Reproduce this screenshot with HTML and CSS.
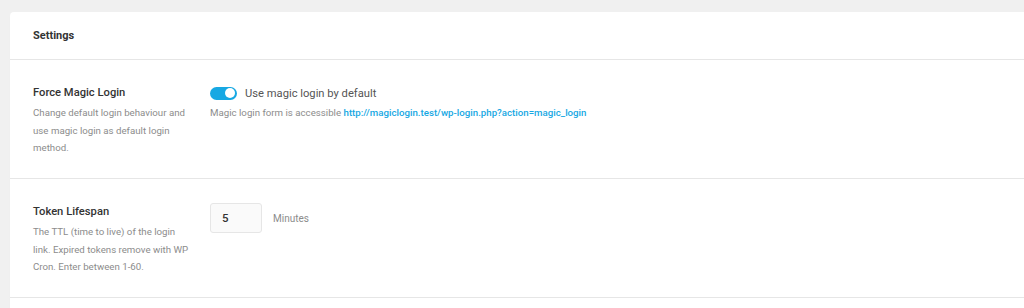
FILE: index.html
```html
<!DOCTYPE html>
<html>
<head>
<meta charset="utf-8">
<link rel="stylesheet" href="styles.css">
</head>
<body>
<div class="card">
  <div class="card-header">Settings</div>
  <div class="row">
    <div class="label-col">
      <div class="label">Force Magic Login</div>
      <p class="desc">Change default login behaviour and use magic login as default login method.</p>
    </div>
    <div class="field-col">
      <label class="toggle-line">
        <span class="toggle"><span class="knob"></span></span>
        <span class="toggle-text">Use magic login by default</span>
      </label>
      <p class="help">Magic login form is accessible <a class="link" href="#">http://magiclogin.test/wp-login.php?action=magic_login</a></p>
    </div>
  </div>
  <div class="row">
    <div class="label-col">
      <div class="label">Token Lifespan</div>
      <p class="desc">The TTL (time to live) of the login link. Expired tokens remove with WP Cron. Enter between 1-60.</p>
    </div>
    <div class="field-col">
      <div class="input-line">
        <span class="num-input">5</span>
        <span class="unit">Minutes</span>
      </div>
    </div>
  </div>
  <div class="tail"></div>
</div>
</body>
</html>
```
FILE: styles.css
```css
html, body {
  margin: 0;
  padding: 0;
  overflow: hidden;
}
body {
  background: #f0f0f0;
  font-family: Roboto, "Liberation Sans", sans-serif;
  width: 1024px;
  height: 308px;
}
.card {
  margin: 12px -10px 0 10px;
  background: #fff;
  border-radius: 4px 4px 0 0;
  box-shadow: 0 1px 1px rgba(0,0,0,0.04);
}
.card-header {
  height: 47px;
  display: flex;
  align-items: center;
  padding-left: 23px;
  font-size: 11px;
  font-weight: 700;
  color: #333;
  border-bottom: 1px solid #e6e6e6;
}
.row {
  display: flex;
  padding: 23px 23px 23px 23px;
  height: 72px;
  border-bottom: 1px solid #e6e6e6;
}
.tail {
  height: 10px;
}
.label-col {
  width: 158px;
  flex: none;
  margin-right: 19px;
}
.label {
  font-size: 11.2px;
  font-weight: 500;
  color: #333;
  line-height: 18px;
  margin-top: 1px;
}
.desc {
  margin: 2px 0 0 0;
  font-size: 9.7px;
  line-height: 17.5px;
  color: #8c8c8c;
}
.field-col {
  flex: 1;
}
.toggle-line {
  display: flex;
  align-items: center;
  height: 18px;
  margin-top: 1px;
}
.toggle {
  width: 27px;
  height: 13px;
  border-radius: 7px;
  background: #17a8e3;
  position: relative;
  margin-right: 8px;
}
.knob {
  position: absolute;
  right: 2px;
  top: 1.5px;
  width: 10px;
  height: 10px;
  border-radius: 50%;
  background: #fff;
}
.toggle-text {
  font-size: 11.2px;
  color: #555;
}
.help {
  margin: 2px 0 0 0;
  font-size: 9.7px;
  line-height: 17.5px;
  color: #8c8c8c;
}
.link {
  color: #17a8e3;
  text-decoration: none;
  font-weight: 500;
}
.input-line {
  display: flex;
  align-items: center;
  margin-top: 1px;
}
.num-input {
  box-sizing: border-box;
  width: 52px;
  height: 30px;
  border: 1px solid #e6e6e6;
  border-radius: 3px;
  background: #fafafa;
  font-size: 11.5px;
  color: #333;
  font-weight: 500;
  display: flex;
  align-items: center;
  padding-left: 11px;
}
.unit {
  margin-left: 11px;
  font-size: 10px;
  color: #8c8c8c;
}
```
